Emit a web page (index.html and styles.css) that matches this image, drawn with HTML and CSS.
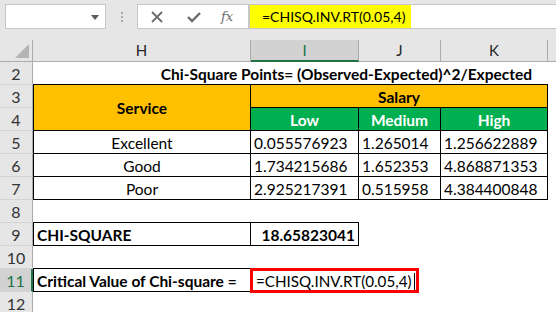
FILE: index.html
```html
<!DOCTYPE html>
<html lang="en">
<head>
    <meta charset="UTF-8">
    <title>Chi-Square</title>
    <link rel="stylesheet" href="styles.css">
</head>
<body>
    <div class="toolbar">
        <div class="namebox"><span class="drop"></span></div>
        <div class="grip"><i></i><i></i><i></i></div>
        <div class="fbuttons">
            <svg width="12" height="12" viewBox="0 0 12 12"><path d="M1 1 L11 11 M11 1 L1 11" stroke="#6b6b6b" stroke-width="1.8"/></svg>
            <svg width="14" height="12" viewBox="0 0 14 12"><path d="M1 6 L5 10 L13 2" stroke="#6b6b6b" stroke-width="2.4" fill="none"/></svg>
            <span class="fx">fx</span>
        </div>
        <div class="formula"><span class="hl">=CHISQ.INV.RT(0.05,4)</span></div>
    </div>

    <div class="sheet">
        <!-- column headers -->
        <div class="corner"><span class="tri"></span></div>
        <div class="colhead">H</div>
        <div class="colhead active">I</div>
        <div class="colhead">J</div>
        <div class="colhead">K</div>
        <div class="colhead rest"></div>

        <!-- row 2 -->
        <div class="rowhead">2</div>
        <div class="cell title span4">Chi-Square Points= (Observed-Expected)^2/Expected</div>
        <div class="cell"></div>

        <!-- row 3 / 4 -->
        <div class="rowhead">3</div>
        <div class="cell orange bl br bb center bold tall">Service</div>
        <div class="cell orange br bb center bold span3">Salary</div>
        <div class="cell"></div>
        <div class="rowhead">4</div>
        <div class="cell green br bb center bold">Low</div>
        <div class="cell green br bb center bold">Medium</div>
        <div class="cell green br bb center bold">High</div>
        <div class="cell"></div>

        <!-- rows 5-7 -->
        <div class="rowhead">5</div>
        <div class="cell bl br bb center">Excellent</div>
        <div class="cell br bb">0.055576923</div>
        <div class="cell br bb">1.265014</div>
        <div class="cell br bb">1.256622889</div>
        <div class="cell"></div>

        <div class="rowhead">6</div>
        <div class="cell bl br bb center">Good</div>
        <div class="cell br bb">1.734215686</div>
        <div class="cell br bb">1.652353</div>
        <div class="cell br bb">4.868871353</div>
        <div class="cell"></div>

        <div class="rowhead">7</div>
        <div class="cell bl br bb center">Poor</div>
        <div class="cell br bb">2.925217391</div>
        <div class="cell br bb">0.515958</div>
        <div class="cell br bb">4.384400848</div>
        <div class="cell"></div>

        <!-- row 8 -->
        <div class="rowhead">8</div>
        <div class="cell bb"></div>
        <div class="cell bb"></div>
        <div class="cell span3"></div>

        <!-- row 9 -->
        <div class="rowhead">9</div>
        <div class="cell bl br bb bold">CHI-SQUARE</div>
        <div class="cell br bb bold right">18.65823041</div>
        <div class="cell span3"></div>

        <!-- row 10 -->
        <div class="rowhead">10</div>
        <div class="cell bb"></div>
        <div class="cell span4"></div>

        <!-- row 11 -->
        <div class="rowhead active">11</div>
        <div class="cell bl br bb bold">Critical Value of Chi-square =</div>
        <div class="cell edit span2"><span class="editbox">=CHISQ.INV.RT(0.05,4)<i class="cursor"></i></span></div>
        <div class="cell span2"></div>

        <!-- row 12 -->
        <div class="rowhead">12</div>
        <div class="cell span5"></div>
    </div>
</body>
</html>
```

FILE: styles.css
```css
body {
    margin: 0;
    width: 556px;
    height: 312px;
    overflow: hidden;
    background-color: #e6e6e6;
    font-family: 'Lato', sans-serif;
    color: #000;
}
.toolbar {
    display: flex;
    align-items: flex-start;
    height: 40px;
    padding: 4px 0 0 5px;
    box-sizing: border-box;
}
.namebox {
    width: 101px;
    height: 25px;
    box-sizing: border-box;
    background: #fff;
    border: 1px solid #c6c6c6;
    position: relative;
}
.drop {
    position: absolute;
    right: 6px;
    top: 10px;
    border-left: 4px solid transparent;
    border-right: 4px solid transparent;
    border-top: 5px solid #595959;
}
.grip {
    display: flex;
    flex-direction: column;
    gap: 2px;
    margin: 8px 14px 0 15px;
}
.grip i {
    display: block;
    width: 2px;
    height: 2px;
    background: #a6a6a6;
}
.fbuttons {
    width: 112px;
    height: 25px;
    box-sizing: border-box;
    background: #fff;
    border: 1px solid #c6c6c6;
    display: flex;
    align-items: center;
    padding-left: 13px;
    gap: 24px;
}
.fx {
    font-family: 'DejaVu Serif', serif;
    font-style: italic;
    font-size: 13px;
    color: #6b6b6b;
    margin-left: -4px;
}
.formula {
    flex: 1;
    height: 25px;
    box-sizing: border-box;
    background: #fff;
    border: 1px solid #c6c6c6;
    border-right: none;
}
.hl {
    display: inline-block;
    height: 23px;
    line-height: 23px;
    background: #ffff00;
    padding: 0 6px 0 12px;
    font-size: 14px;
}
.sheet {
    display: grid;
    grid-template-columns: 33px 218px 108px 82px 107px 8px;
    grid-template-rows: 22px repeat(11, 23px);
    background: #fff;
}
.corner {
    background: #e6e6e6;
    border-right: 1px solid #ababab;
    border-bottom: 1px solid #ababab;
    position: relative;
}
.tri {
    position: absolute;
    left: 15px;
    top: 4px;
    border-left: 14px solid transparent;
    border-bottom: 14px solid #b4b4b4;
}
.colhead {
    background: #e6e6e6;
    border-right: 1px solid #ababab;
    border-bottom: 1px solid #ababab;
    font-size: 15px;
    color: #262626;
    text-align: center;
    line-height: 21px;
}
.colhead.active {
    background: #d2d2d2;
    color: #217346;
    border-bottom: 2px solid #217346;
}
.colhead.rest {
    border-right: none;
}
.rowhead {
    background: #e6e6e6;
    border-right: 1px solid #ababab;
    border-bottom: 1px solid #d4d4d4;
    font-size: 16px;
    color: #333;
    text-align: center;
    line-height: 23px;
}
.rowhead.active {
    background: #d2d2d2;
    color: #217346;
    border-right: 2px solid #217346;
}
.cell {
    font-size: 15.5px;
    line-height: 24px;
    padding: 0 3px;
    white-space: nowrap;
    box-sizing: border-box;
}
.span2 { grid-column: span 2; }
.span3 { grid-column: span 3; }
.span4 { grid-column: span 4; }
.span5 { grid-column: span 5; }
.tall {
    grid-row: span 2;
    display: flex;
    align-items: center;
    justify-content: center;
}
.title {
    font-weight: bold;
    text-align: right;
    padding-right: 16px;
    border-bottom: 1px solid #000;
}
.bl { border-left: 1px solid #000; }
.br { border-right: 1px solid #000; }
.bb { border-bottom: 1px solid #000; }
.center { text-align: center; }
.right { text-align: right; }
.bold { font-weight: bold; }
.orange { background: #ffc000; }
.green {
    background: #00b050;
    color: #fff;
}
.edit {
    padding: 0;
}
.editbox {
    display: inline-block;
    box-sizing: border-box;
    width: 169px;
    height: 25px;
    margin: -1px 0 0 -1px;
    border: 3px solid #ff0000;
    padding-left: 3px;
    line-height: 20px;
    font-size: 15.2px;
}
.cursor {
    display: inline-block;
    width: 1px;
    height: 17px;
    background: #000;
    vertical-align: -3px;
    margin-left: 2px;
}
```
